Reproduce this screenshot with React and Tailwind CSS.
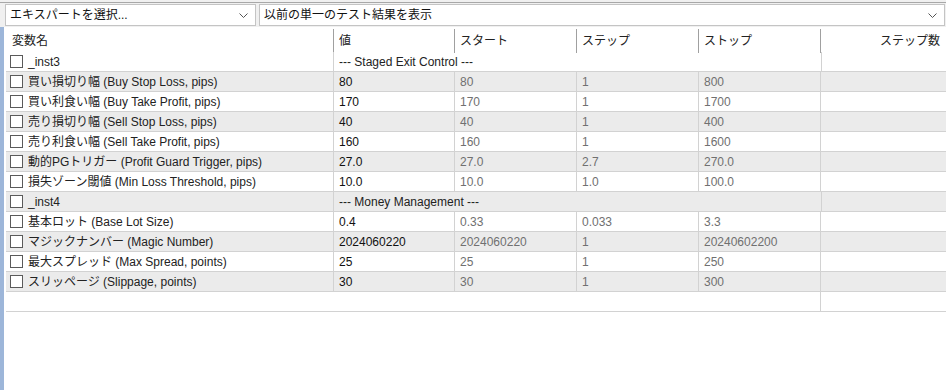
import React from 'react'

const rows = [
  { type: 'section', name: '_inst3', title: '--- Staged Exit Control ---' },
  { name: '買い損切り幅 (Buy Stop Loss, pips)', value: '80', start: '80', step: '1', stop: '800' },
  { name: '買い利食い幅 (Buy Take Profit, pips)', value: '170', start: '170', step: '1', stop: '1700' },
  { name: '売り損切り幅 (Sell Stop Loss, pips)', value: '40', start: '40', step: '1', stop: '400' },
  { name: '売り利食い幅 (Sell Take Profit, pips)', value: '160', start: '160', step: '1', stop: '1600' },
  { name: '動的PGトリガー (Profit Guard Trigger, pips)', value: '27.0', start: '27.0', step: '2.7', stop: '270.0' },
  { name: '損失ゾーン閾値 (Min Loss Threshold, pips)', value: '10.0', start: '10.0', step: '1.0', stop: '100.0' },
  { type: 'section', name: '_inst4', title: '--- Money Management ---' },
  { name: '基本ロット (Base Lot Size)', value: '0.4', start: '0.33', step: '0.033', stop: '3.3' },
  { name: 'マジックナンバー (Magic Number)', value: '2024060220', start: '2024060220', step: '1', stop: '20240602200' },
  { name: '最大スプレッド (Max Spread, points)', value: '25', start: '25', step: '1', stop: '250' },
  { name: 'スリッページ (Slippage, points)', value: '30', start: '30', step: '1', stop: '300' },
]

const grid = 'grid grid-cols-[327px_121px_122px_122px_122px_1fr]'

function Chevron() {
  return (
    <svg width="9" height="5" viewBox="0 0 9 5" className="shrink-0">
      <path d="M0.5 0.5 L4.5 4.5 L8.5 0.5" fill="none" stroke="#555" strokeWidth="1" />
    </svg>
  )
}

function Dropdown({ label, width }) {
  return (
    <div className={`${width} h-[22px] bg-white border border-[#c4c4c4] flex items-center justify-between pl-[4px] pr-[7px]`}>
      <span className="text-[12px] text-[#111] leading-none">{label}</span>
      <Chevron />
    </div>
  )
}

function Checkbox() {
  return <div className="w-[13px] h-[13px] border border-[#5a5a5a] bg-white shrink-0" />
}

export default function App() {
  return (
    <div
      className="w-[946px] h-[390px] bg-white overflow-hidden flex flex-col"
      style={{ fontFamily: '"Liberation Sans", "Noto Sans CJK JP", sans-serif' }}
    >
      {/* Toolbar */}
      <div className="bg-[#f0f0f0] pt-[2px]">
        <div className="border-t border-[#a8a8a8] flex gap-[3px] pl-[5px] pt-[1px] pb-[1px]">
          <Dropdown label="エキスパートを選択..." width="w-[251px]" />
          <Dropdown label="以前の単一のテスト結果を表示" width="w-[686px]" />
        </div>
      </div>

      <div className="flex flex-1">
        <div className="w-[4px] bg-[#9db6d9]" />
        <div className="flex-1 pl-[2px] text-[12px] leading-none">
          {/* Header */}
          <div className={`${grid} h-[25px] text-[#222]`}>
            <div className="pl-[6px] flex items-center pt-[2px]">変数名</div>
            {['値', 'スタート', 'ステップ', 'ストップ'].map((h) => (
              <div key={h} className="flex items-center pt-[2px]">
                <div className="w-px h-[24px] bg-[#a0a0a0] self-end" />
                <span className="pl-[5px] pr-1">{h}</span>
              </div>
            ))}
            <div className="flex items-center pt-[2px]">
              <div className="w-px h-[24px] bg-[#a0a0a0] self-end" />
              <span className="flex-1 text-right pr-[6px]">ステップ数</span>
            </div>
          </div>

          {/* Rows */}
          {rows.map((r, i) => {
            const bg = i % 2 === 1 ? 'bg-[#ebebeb]' : 'bg-white'
            if (r.type === 'section') {
              return (
                <div key={r.name} className={`grid grid-cols-[327px_488px_1fr] h-[20px] border-b border-[#d2d2d2] ${bg}`}>
                  <div className="flex items-center gap-[5px] pl-[4px] text-[#222]">
                    <Checkbox />
                    <span>{r.name}</span>
                  </div>
                  <div className="border-l border-[#d2d2d2] pl-[5px] flex items-center text-[#222]">{r.title}</div>
                  <div className="border-l border-[#d2d2d2]" />
                </div>
              )
            }
            return (
              <div key={r.name} className={`${grid} h-[20px] border-b border-[#d2d2d2] ${bg}`}>
                <div className="flex items-center gap-[5px] pl-[4px] text-[#222] whitespace-nowrap">
                  <Checkbox />
                  <span>{r.name}</span>
                </div>
                <div className="border-l border-[#d2d2d2] pl-[5px] flex items-center text-[#111]">{r.value}</div>
                <div className="border-l border-[#d2d2d2] pl-[5px] flex items-center text-[#707070]">{r.start}</div>
                <div className="border-l border-[#d2d2d2] pl-[5px] flex items-center text-[#707070]">{r.step}</div>
                <div className="border-l border-[#d2d2d2] pl-[5px] flex items-center text-[#707070]">{r.stop}</div>
                <div className="border-l border-[#d2d2d2]" />
              </div>
            )
          })}

          {/* Empty row */}
          <div className="grid grid-cols-[814px_1fr] h-[20px] border-b border-[#d2d2d2]">
            <div />
            <div className="border-l border-[#d2d2d2]" />
          </div>
        </div>
      </div>
    </div>
  )
}
